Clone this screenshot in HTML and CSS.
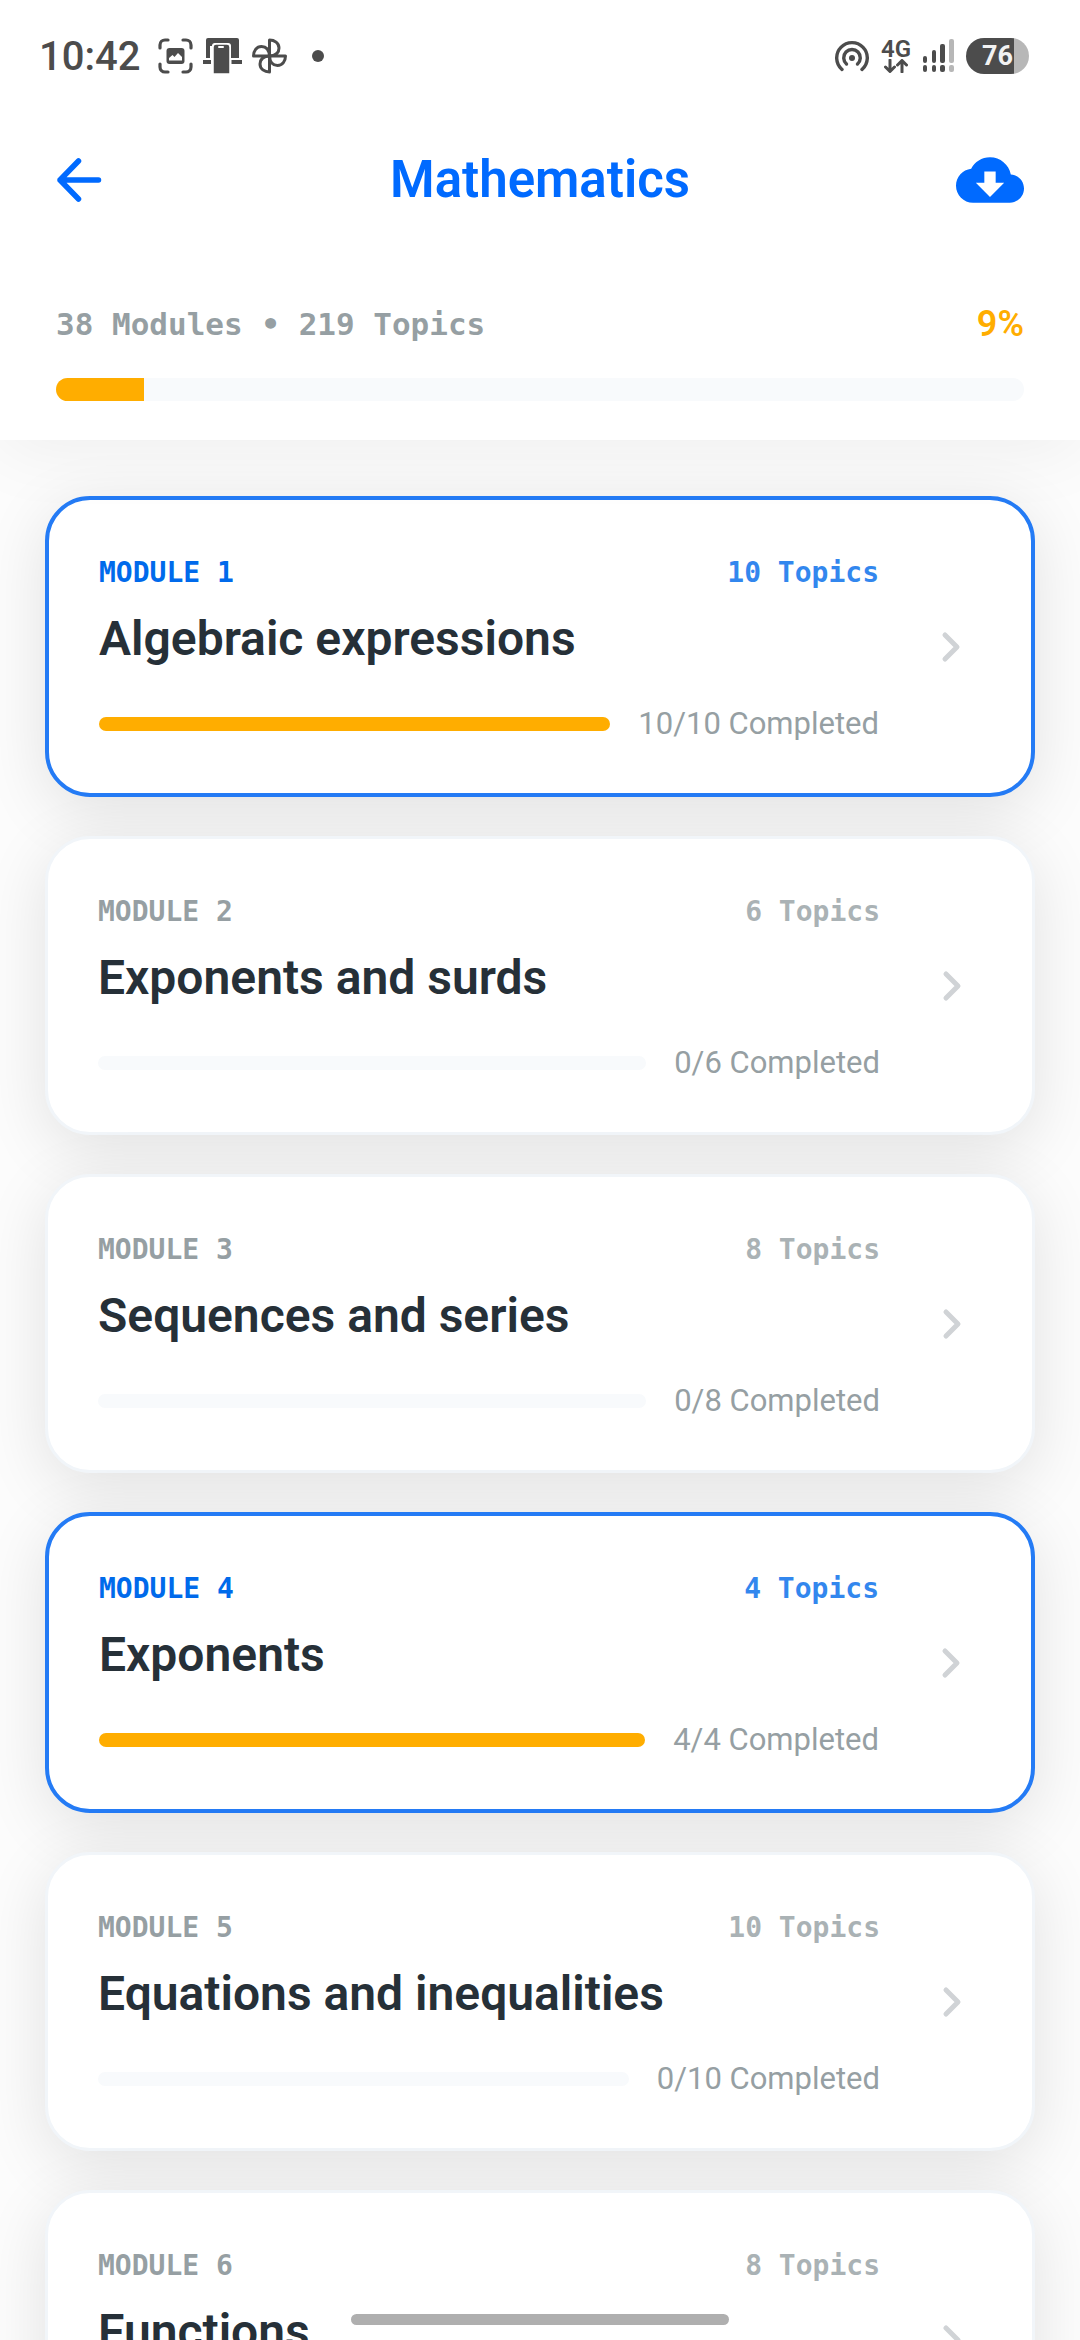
FILE: index.html
```
<!DOCTYPE html>
<html lang="en">

<head>
  <meta charset="UTF-8">
  <meta name="viewport" content="width=device-width, initial-scale=1.0">
  <title>Mathematics</title>
  <link rel="stylesheet" href="styles.css">
</head>

<body>
  <svg width="0" height="0" class="sprite">
    <symbol id="chevron" viewBox="0 0 62 62">
      <path d="M26 19l12 12-12 12" fill="none" stroke="currentColor" stroke-width="5" stroke-linecap="round" stroke-linejoin="round" />
    </symbol>
  </svg>

  <header class="top">
    <div class="status-bar">
      <span class="time">10:42</span>
      <svg class="scan" width="35" height="36" viewBox="0 0 35 36">
        <path d="M2 10V7a5 5 0 0 1 5-5h3M25 2h3a5 5 0 0 1 5 5v3M33 26v3a5 5 0 0 1-5 5h-3M10 34H7a5 5 0 0 1-5-5v-3" fill="none" stroke="currentColor" stroke-width="3.200" stroke-linecap="round" />
        <rect x="8.500" y="10" width="18" height="16" rx="3" fill="currentColor" />
        <path d="M11 22.500v-2.500l3.500-3 2 2 3.500-4 4 4v3.500z" fill="#fff" />
      </svg>
      <svg width="39" height="36" viewBox="0 0 39 36">
        <path d="M3 20V2a2 2 0 0 1 2-2h29a2 2 0 0 1 2 2v18h-8V8a3 3 0 0 0-3-3H12a3 3 0 0 0-3 3H7v12zM0 22h8v4H0zM28.500 22H39v4H28.500z" fill="currentColor" />
        <path d="M10 36V9a3 3 0 0 1 3-3h11a3 3 0 0 1 3 3v27z" fill="currentColor" stroke="#fff" stroke-width="1.500" />
        <rect x="15" y="8" width="6" height="2" rx="1" fill="#fff" />
      </svg>
      <svg width="35" height="36" viewBox="0 0 35 36">
        <g fill="none" stroke="currentColor" stroke-width="3" stroke-linejoin="round">
          <path d="M17.500 18V2c5 0 9.500 3 9.500 8 0 4-2.500 7.500-9.500 8z" />
          <path d="M17.500 18V2c5 0 9.500 3 9.500 8 0 4-2.500 7.500-9.500 8z" transform="rotate(90 17.500 18)" />
          <path d="M17.500 18V2c5 0 9.500 3 9.500 8 0 4-2.500 7.500-9.500 8z" transform="rotate(180 17.500 18)" />
          <path d="M17.500 18V2c5 0 9.500 3 9.500 8 0 4-2.500 7.500-9.500 8z" transform="rotate(270 17.500 18)" />
        </g>
      </svg>
      <span class="dot"></span>

      <div class="status-right">
        <svg width="34" height="36" viewBox="0 0 34 36">
          <g fill="none" stroke="currentColor" stroke-width="3.400" stroke-linecap="round">
            <path d="M7 31.500A15.300 15.300 0 1 1 27 31.500" />
            <path d="M11.500 26A8.300 8.300 0 1 1 22.500 26" />
          </g>
          <circle cx="17" cy="20" r="3" fill="currentColor" />
        </svg>
        <div class="network">
          <span>4G</span>
          <svg width="24" height="14" viewBox="0 0 24 14">
            <path d="M6 1v11M1.500 8L6 12.500 10.500 8M18 13V2M13.500 6L18 1.500 22.500 6" fill="none" stroke="currentColor" stroke-width="3" stroke-linecap="round" stroke-linejoin="round" />
          </svg>
        </div>
        <svg width="31" height="34" viewBox="0 0 31 34">
          <g fill="currentColor">
            <rect y="17" width="4" height="7" rx="2" />
            <rect x="9" y="11" width="4" height="13" rx="2" />
            <rect x="17" y="5" width="5" height="19" rx="2" />
            <rect y="26" width="4" height="7" rx="2" />
            <rect x="9" y="26" width="4" height="7" rx="2" />
            <rect x="17" y="26" width="5" height="7" rx="2" />
          </g>
          <g fill="#b7b7b7">
            <rect x="26" width="5" height="24" rx="2" />
            <rect x="26" y="26" width="5" height="7" rx="2" />
          </g>
        </svg>
        <div class="battery">76</div>
      </div>
    </div>

    <nav class="nav">
      <button class="icon-button" type="button" aria-label="Back">
        <svg width="46" height="46" viewBox="0 0 46 46">
          <path d="M22.500 4L4 23l18.500 19M4 23h38.500" fill="none" stroke="currentColor" stroke-width="5.500" stroke-linecap="round" stroke-linejoin="round" />
        </svg>
      </button>
      <h1>Mathematics</h1>
      <button class="icon-button" type="button" aria-label="Download">
        <svg width="68" height="68" viewBox="0 0 24 24">
          <path fill="currentColor" d="M19.350 10.040C18.670 6.590 15.640 4 12 4 9.110 4 6.600 5.640 5.350 8.040 2.340 8.360 0 10.910 0 14c0 3.310 2.690 6 6 6h13c2.760 0 5-2.240 5-5 0-2.640-2.050-4.780-4.650-4.960zM17 13l-5 5-5-5h3V9h4v4h3z" />
        </svg>
      </button>
    </nav>

    <div class="summary">
      <div class="summary-text">
        <span>38 Modules • 219 Topics</span>
        <span class="percent">9%</span>
      </div>
      <div class="bar bar-large">
        <div class="fill" style="width: 9.130%;"></div>
      </div>
    </div>
  </header>

  <main class="modules">
    <a href="#" class="card done">
      <div class="info">
        <div class="row"><span class="module">MODULE 1</span><span class="topics">10 Topics</span></div>
        <h2>Algebraic expressions</h2>
        <div class="row">
          <div class="bar">
            <div class="fill" style="width: 100%;"></div>
          </div>
          <span class="completed">10/10 Completed</span>
        </div>
      </div>
      <svg class="chevron"><use href="#chevron" /></svg>
    </a>

    <a href="#" class="card">
      <div class="info">
        <div class="row"><span class="module">MODULE 2</span><span class="topics">6 Topics</span></div>
        <h2>Exponents and surds</h2>
        <div class="row">
          <div class="bar"></div>
          <span class="completed">0/6 Completed</span>
        </div>
      </div>
      <svg class="chevron"><use href="#chevron" /></svg>
    </a>

    <a href="#" class="card">
      <div class="info">
        <div class="row"><span class="module">MODULE 3</span><span class="topics">8 Topics</span></div>
        <h2>Sequences and series</h2>
        <div class="row">
          <div class="bar"></div>
          <span class="completed">0/8 Completed</span>
        </div>
      </div>
      <svg class="chevron"><use href="#chevron" /></svg>
    </a>

    <a href="#" class="card done">
      <div class="info">
        <div class="row"><span class="module">MODULE 4</span><span class="topics">4 Topics</span></div>
        <h2>Exponents</h2>
        <div class="row">
          <div class="bar">
            <div class="fill" style="width: 100%;"></div>
          </div>
          <span class="completed">4/4 Completed</span>
        </div>
      </div>
      <svg class="chevron"><use href="#chevron" /></svg>
    </a>

    <a href="#" class="card">
      <div class="info">
        <div class="row"><span class="module">MODULE 5</span><span class="topics">10 Topics</span></div>
        <h2>Equations and inequalities</h2>
        <div class="row">
          <div class="bar"></div>
          <span class="completed">0/10 Completed</span>
        </div>
      </div>
      <svg class="chevron"><use href="#chevron" /></svg>
    </a>

    <a href="#" class="card">
      <div class="info">
        <div class="row"><span class="module">MODULE 6</span><span class="topics">8 Topics</span></div>
        <h2>Functions</h2>
        <div class="row">
          <div class="bar"></div>
        </div>
      </div>
      <svg class="chevron"><use href="#chevron" /></svg>
    </a>
  </main>

  <div class="home-indicator"></div>
</body>

</html>
```

FILE: styles.css
```
* {
  box-sizing: border-box;
}

body {
  margin: 0;
  height: 100vh;
  display: flex;
  flex-direction: column;
  overflow: hidden;
  background-color: #fcfcfc;
  font-family: Roboto, sans-serif;
  color: #263038;
}

h1,
h2 {
  margin: 0;
  font-weight: 600;
}

svg {
  display: block;
  flex-shrink: 0;
}

.sprite {
  position: absolute;
}

/* Header */
.top {
  position: relative;
  z-index: 1;
  background-color: #fff;
  box-shadow: 0 10px 70px rgba(0, 0, 0, 0.06);
}

.status-bar {
  height: 112px;
  padding: 0 51px 0 39px;
  display: flex;
  align-items: center;
  gap: 10px;
  color: #4c4c4c;
}

.time {
  font-size: 40px;
  font-weight: 500;
}

.scan {
  margin-left: 8px;
}

.dot {
  width: 12px;
  height: 12px;
  margin-left: 15px;
  border-radius: 50%;
  background-color: #4c4c4c;
}

.status-right {
  margin-left: auto;
  display: flex;
  align-items: center;
  gap: 12px;
}

.network {
  display: flex;
  flex-direction: column;
  align-items: center;
  font-size: 24px;
  line-height: 20px;
  font-weight: 600;
}

.battery {
  width: 63px;
  height: 36px;
  border-radius: 18px;
  padding-left: 16px;
  background: linear-gradient(to right, #4c4c4c 76%, #b7b7b7 76%);
  color: #f2f2f2;
  font-size: 27px;
  line-height: 36px;
  font-weight: 700;
}

.nav {
  height: 136px;
  padding: 0 56px;
  display: grid;
  grid-template-columns: 68px 1fr 68px;
  align-items: center;
  color: #006aff;
}

.nav h1 {
  font-size: 51px;
  line-height: 64px;
  text-align: center;
}

.icon-button {
  padding: 0;
  border: none;
  background: none;
  color: inherit;
  cursor: pointer;
}

.summary {
  padding: 53px 56px 39px;
}

.summary-text {
  display: flex;
  justify-content: space-between;
  align-items: center;
  margin-bottom: 31px;
  font-family: "DejaVu Sans Mono", monospace;
  font-size: 31px;
  line-height: 46px;
  font-weight: 700;
  color: #969fa3;
}

.percent {
  font-family: Roboto, sans-serif;
  font-size: 36px;
  font-weight: 600;
  color: #ffad00;
}

/* Progress bars */
.bar {
  flex: 1;
  height: 14px;
  border-radius: 7px;
  overflow: hidden;
  background-color: #f8fafc;
}

.bar-large {
  height: 23px;
  border-radius: 12px;
}

.fill {
  height: 100%;
  background-color: #ffad00;
}

/* Module cards */
.modules {
  flex: 1;
  min-height: 0;
  padding: 56px 45px;
  display: flex;
  flex-direction: column;
  gap: 39px;
  overflow: hidden;
}

.card {
  position: relative;
  flex-shrink: 0;
  min-height: 299px;
  padding: 0 50px;
  display: flex;
  align-items: center;
  gap: 40px;
  border: 3px solid #f1f5f9;
  border-radius: 45px;
  background-color: #fff;
  box-shadow: 0 14px 65px rgba(0, 0, 0, 0.11);
  color: inherit;
  text-decoration: none;
}

.info {
  flex: 1;
  align-self: flex-start;
  padding: 55px 0 49px;
}

.row {
  display: flex;
  justify-content: space-between;
  align-items: center;
  gap: 28px;
}

.module,
.topics {
  font-family: "DejaVu Sans Mono", monospace;
  font-size: 28px;
  line-height: 36px;
  font-weight: 700;
  color: #969fa3;
}

.topics {
  opacity: 0.8;
}

.card h2 {
  margin: 18px 0 35px;
  font-size: 48px;
  line-height: 60px;
}

.completed {
  font-size: 31px;
  line-height: 40px;
  color: #969fa3;
}

.chevron {
  width: 62px;
  height: 62px;
  color: #d0d3d6;
}

.done {
  border: 4px solid #247bf5;
}

.done .module,
.done .topics {
  color: #006aeb;
}

.home-indicator {
  position: fixed;
  z-index: 2;
  left: 50%;
  bottom: 15px;
  width: 35%;
  height: 11px;
  border-radius: 6px;
  background-color: #afafaf;
  transform: translateX(-50%);
}
```
